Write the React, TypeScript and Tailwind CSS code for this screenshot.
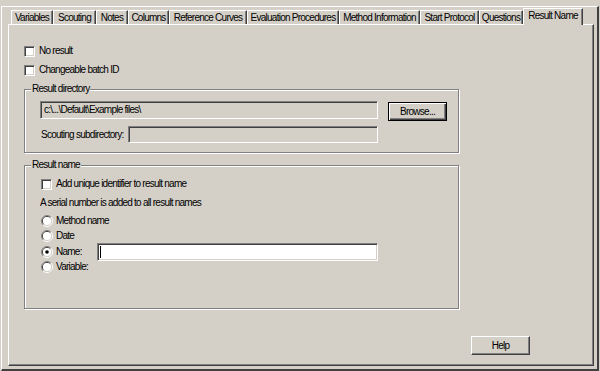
import React from "react";

function CheckBox({ label }: { label: string }) {
  return (
    <div className="flex h-[12px] items-center">
      <span className="box-border h-[11px] w-[11px] shrink-0 border border-t-[#808080] border-l-[#808080] border-r-white border-b-white bg-white shadow-[inset_1px_1px_0_#404040,inset_-1px_-1px_0_#d4d0c8]" />
      <span className="ml-[4px] leading-[12px] whitespace-nowrap">{label}</span>
    </div>
  );
}

function Radio({ checked }: { checked?: boolean }) {
  return (
    <svg width="12" height="12" viewBox="0 0 12 12" className="shrink-0">
      <path d="M2.1 9.9 A5.5 5.5 0 0 1 9.9 2.1" fill="none" stroke="#808080" strokeWidth="1" />
      <path d="M9.9 2.1 A5.5 5.5 0 0 1 2.1 9.9" fill="none" stroke="#ffffff" strokeWidth="1" />
      <path d="M2.8 9.2 A4.5 4.5 0 0 1 9.2 2.8" fill="none" stroke="#404040" strokeWidth="1" />
      <path d="M9.2 2.8 A4.5 4.5 0 0 1 2.8 9.2" fill="none" stroke="#d4d0c8" strokeWidth="1" />
      <circle cx="6" cy="6" r="4" fill="#ffffff" />
      {checked && <circle cx="6" cy="6" r="1.8" fill="#000000" />}
    </svg>
  );
}

function RadioRow({ label, checked }: { label: string; checked?: boolean }) {
  return (
    <div className="flex h-[12px] items-center">
      <Radio checked={checked} />
      <span className="ml-[3px] leading-[12px] whitespace-nowrap">{label}</span>
    </div>
  );
}

const tabs: { label: string; w: string }[] = [
  { label: "Variables", w: "w-[42px]" },
  { label: "Scouting", w: "w-[43px]" },
  { label: "Notes", w: "w-[32px]" },
  { label: "Columns", w: "w-[41px]" },
  { label: "Reference Curves", w: "w-[78px]" },
  { label: "Evaluation Procedures", w: "w-[92px]" },
  { label: "Method Information", w: "w-[81px]" },
  { label: "Start Protocol", w: "w-[59px]" },
  { label: "Questions", w: "w-[44px]" },
];

export default function App() {
  return (
    <div className="h-[371px] w-[600px] overflow-hidden bg-[#d4d0c8] text-[10px] tracking-[-0.75px] text-black font-['Liberation_Sans',Arial,sans-serif]">
      <div className="ml-[1px] mt-[6px] box-border h-[365px] w-[598px] border-t border-l border-r-2 border-b-2 border-t-white border-l-white border-r-[#404040] border-b-[#404040]">
        <div className="pl-[6px]">
          {/* tab strip */}
          <div className="flex h-[17px] items-end pl-[3px]">
            {tabs.map((t) => (
              <div
                key={t.label}
                className={`${t.w} box-border flex h-[14px] items-center justify-center whitespace-nowrap border-t border-l border-r border-t-white border-l-white border-r-[#404040] shadow-[inset_-1px_0_0_#808080] leading-[12px]`}
              >
                {t.label}
              </div>
            ))}
            <div className="relative z-10 -mb-[1px] box-border flex h-[17px] w-[60px] items-start justify-center whitespace-nowrap border-t border-l border-r border-t-white border-l-white border-r-[#404040] bg-[#d4d0c8] pt-[1px] shadow-[inset_-1px_0_0_#808080] leading-[12px]">
              Result Name
            </div>
          </div>
          {/* panel */}
          <div className="box-border flex h-[342px] w-[586px] flex-col border border-t-white border-l-white border-r-[#404040] border-b-[#404040] pl-[15px] pt-[20px] shadow-[inset_-1px_-1px_0_#808080]">
            <CheckBox label="No result" />
            <div className="mt-[7px]">
              <CheckBox label="Changeable batch ID" />
            </div>

            <fieldset className="mt-[7px] w-[435px] border border-[#808080] pl-[6px] pb-[9px] shadow-[inset_1px_1px_0_#fff,1px_1px_0_#fff]">
              <legend className="bg-[#d4d0c8] px-[1px] leading-[12px]">Result directory</legend>
              <div className="pl-[9px] pt-[6px]">
                <div className="flex items-start">
                  <div className="box-border flex h-[18px] w-[338px] items-center border border-t-[#808080] border-l-[#808080] border-r-white border-b-white bg-[#d4d0c8] pl-[3px] shadow-[inset_1px_1px_0_#404040,inset_-1px_-1px_0_#d4d0c8] leading-[12px] whitespace-nowrap">
                    c:\...\Default\Example files\
                  </div>
                  <div className="ml-[10px] mt-[1px] box-border flex h-[19px] w-[59px] items-center justify-center border border-black shadow-[inset_1px_1px_0_#fff,inset_-1px_-1px_0_#404040,inset_-2px_-2px_0_#808080] leading-[12px]">
                    Browse...
                  </div>
                </div>
                <div className="mt-[5px] flex items-center">
                  <div className="w-[88px] pl-[1px] leading-[12px] whitespace-nowrap">Scouting subdirectory:</div>
                  <div className="box-border h-[17px] w-[250px] border border-t-[#808080] border-l-[#808080] border-r-white border-b-white bg-[#d4d0c8] shadow-[inset_1px_1px_0_#404040,inset_-1px_-1px_0_#d4d0c8]" />
                </div>
              </div>
            </fieldset>

            <fieldset className="mt-[6px] w-[435px] border border-[#808080] pl-[6px] pb-[35px] shadow-[inset_1px_1px_0_#fff,1px_1px_0_#fff]">
              <legend className="bg-[#d4d0c8] px-[1px] leading-[12px]">Result name</legend>
              <div className="pl-[10px] pt-[7px]">
                <CheckBox label="Add unique identifier to result name" />
                <div className="-ml-[1px] mt-[7px] leading-[12px] whitespace-nowrap">
                  A serial number is added to all result names
                </div>
                <div className="mt-[6px]">
                  <RadioRow label="Method name" />
                </div>
                <div className="mt-[3px]">
                  <RadioRow label="Date" />
                </div>
                <div className="mt-[1px] flex h-[18px] items-center">
                  <div className="w-[56px]">
                    <RadioRow label="Name:" checked />
                  </div>
                  <div className="box-border flex h-[18px] w-[281px] items-center border border-t-[#808080] border-l-[#808080] border-r-white border-b-white bg-white pl-[2px] shadow-[inset_1px_1px_0_#404040,inset_-1px_-1px_0_#d4d0c8]">
                    <span className="h-[12px] w-[1px] bg-black" />
                  </div>
                </div>
                <RadioRow label="Variable:" />
              </div>
            </fieldset>

            <div className="mt-[27px] flex justify-end pr-[63px]">
              <div className="box-border flex h-[19px] w-[59px] items-center justify-center border border-t-white border-l-white border-r-[#404040] border-b-[#404040] shadow-[inset_-1px_-1px_0_#808080] leading-[12px]">
                Help
              </div>
            </div>
          </div>
        </div>
      </div>
    </div>
  );
}
